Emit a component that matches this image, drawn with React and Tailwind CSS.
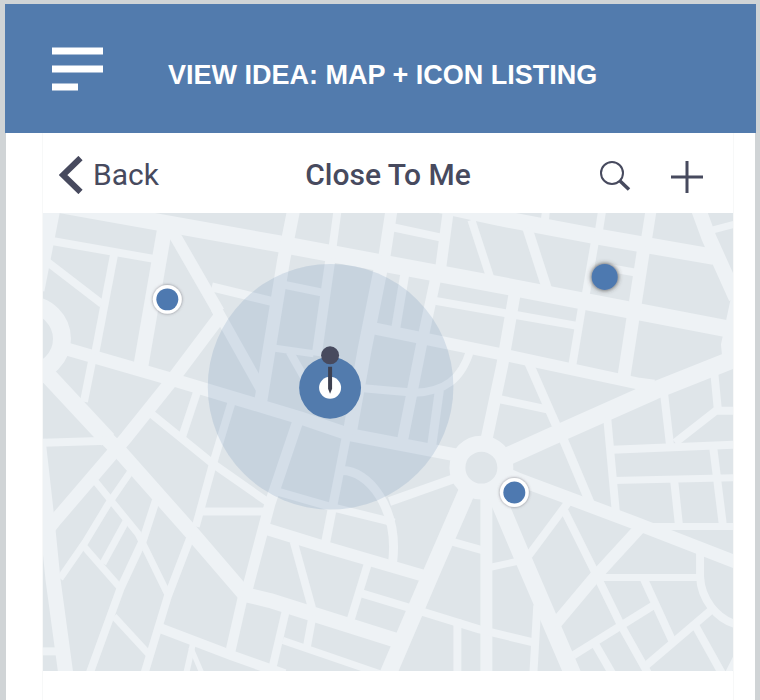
const ROADS = [
  // main avenues
  { w: 17, d: "M40 201L280 244L500 285L734 330" },
  { w: 16, d: "M440 205L500 218L600 237L715 257" },
  { w: 15, d: "M699 208L710 238L737 298" },
  { w: 12, d: "M738 298L728 345L730 365" },
  { w: 18, d: "M490 465L545 440L655 391L738 358" },
  { w: 12, d: "M372 328L500 354L640 384L655 386" },
  { w: 13, d: "M66 349L170 379L270 409L300 418L350 435L460 456" },
  { w: 17, d: "M38 365L108 440" },
  { w: 15, d: "M104 436L120 452L190 531L245 595L270 601L400 642" },
  { w: 15, d: "M38 440L47 520L53 580L66 676" },
  { w: 12, d: "M262 528L327 548L430 578" },
  { w: 17, d: "M470 486L433 571L388 676" },
  { w: 12, d: "M487 490V676" },
  { w: 17, d: "M492 484L522 555L574 676" },
  { w: 13, d: "M500 471L520 480L635 523L738 563" },
  { w: 12, d: "M516 290L503 365L486 445" },

  // left side
  { w: 17, d: "M52 208L36 290" },
  { w: 8, d: "M52 241L154 259" },
  { w: 8, d: "M46 261L102 304" },
  { w: 15, d: "M166 222L140 372" },
  { w: 8, d: "M115 250L95 355" },
  { w: 8, d: "M92 362L84 402" },
  { w: 12, d: "M173 232L219 312" },
  { w: 11, d: "M216 308L263 392" },
  { w: 9, d: "M212 287L274 302" },
  { w: 13, d: "M222 314L171 382L127 437L56 520L44 535" },
  { w: 8, d: "M43 443L108 441" },
  { w: 8, d: "M43 652L58 652" },
  { w: 8, d: "M150 413L213 464L270 504" },
  { w: 8, d: "M197 393L182 438" },
  { w: 8, d: "M232 402L213 465L196 527" },
  { w: 8, d: "M200 512L268 512" },
  { w: 7, d: "M94 480L138 534L146 550L169 597" },
  { w: 7, d: "M130 473L108 505L85 543L60 579" },
  { w: 7, d: "M126 522L103 564" },
  { w: 8, d: "M156 501L143 541L121 588L89 676" },
  { w: 7, d: "M84 547L120 588" },
  { w: 7, d: "M114 617L150 656" },
  { w: 8, d: "M191 537L168 597L144 676" },
  { w: 10, d: "M161 629L232 656L285 675" },
  { w: 10, d: "M243 598L230 655" },
  { w: 6, d: "M193 645L186 676" },
  { w: 5, d: "M191 648L203 676" },
  { w: 11, d: "M298 422L270 505L247 592" },

  // centre
  { w: 13, d: "M294 210L284 260L261 402" },
  { w: 8, d: "M338 210L333 247" },
  { w: 10, d: "M331 258L317 356" },
  { w: 8, d: "M285 285L324 293" },
  { w: 7, d: "M272 348L314 354" },
  { w: 8, d: "M290 352L307 382" },
  { w: 12, d: "M392 210L385 256" },
  { w: 14, d: "M383 260L365 350L350 434" },
  { w: 8, d: "M392 227L443 238" },
  { w: 11, d: "M449 210L441 270" },
  { w: 11, d: "M437 275L422 345L402 446" },
  { w: 9, d: "M406 270L396 330" },
  { w: 8, d: "M472 220L491 278" },
  { w: 8, d: "M436 301L578 326" },
  { w: 8, d: "M358 388L415 393C445 392 462 380 471 350" },
  { w: 9, d: "M440 390L432 448" },
  { w: 9, d: "M347 436L326 543" },
  { w: 8, d: "M278 492L330 507L395 523" },
  { w: 9, d: "M342 471C368 470 400 508 393 564" },
  { w: 9, d: "M390 502L455 479" },
  { w: 8, d: "M294 542L313 611" },
  { w: 8, d: "M369 562L350 624" },
  { w: 8, d: "M362 594L425 613L480 630L534 643" },
  { w: 8, d: "M286 612L271 676" },
  { w: 8, d: "M313 616L307 649" },
  { w: 7, d: "M283 641L382 675" },
  { w: 8, d: "M452 542L484 551" },
  { w: 8, d: "M458 620V676" },
  { w: 7, d: "M490 568L522 561" },

  // right side
  { w: 8, d: "M547 208L545 225" },
  { w: 10, d: "M528 228L548 290" },
  { w: 8, d: "M603 210L598 242" },
  { w: 8, d: "M596 240L586 298" },
  { w: 8, d: "M610 268L638 273" },
  { w: 11, d: "M652 210L646 248" },
  { w: 13, d: "M645 246L624 382" },
  { w: 7, d: "M714 230L736 224" },
  { w: 8, d: "M583 306L573 366" },
  { w: 8, d: "M498 399L549 410" },
  { w: 9, d: "M529 362L558 428" },
  { w: 8, d: "M608 418L617 516" },
  { w: 8, d: "M665 394L671 446" },
  { w: 8, d: "M715 370L719 412" },
  { w: 8, d: "M736 411L717 411L676 443" },
  { w: 8, d: "M613 450L736 445" },
  { w: 7, d: "M614 481L736 478" },
  { w: 8, d: "M714 446L724 527" },
  { w: 8, d: "M675 480L680 527" },
  { w: 7, d: "M640 527L736 527" },
  { w: 9, d: "M563 437L592 506" },
  { w: 8, d: "M571 500L528 558" },
  { w: 8, d: "M564 509L597 575L623 628L650 676" },
  { w: 12, d: "M642 527L597 576L555 626" },
  { w: 7, d: "M600 578H702" },
  { w: 8, d: "M701 550V577C702 600 718 620 738 625" },
  { w: 8, d: "M714 609L645 668" },
  { w: 8, d: "M645 580L673 641" },
  { w: 8, d: "M656 605L574 656" },
  { w: 8, d: "M596 645L614 676" },
  { w: 8, d: "M695 624L724 676" },
  { w: 6, d: "M738 656L728 676" },
  { w: 8, d: "M538 606L534 676" },
];

function CityMap() {
  return (
    <svg
      viewBox="43 213 691 459"
      className="block w-full bg-[#dfe5e9]"
      role="img"
      aria-label="Map of places close to me"
    >
      <defs>
        <filter id="pin-shadow" x="-50%" y="-50%" width="200%" height="200%">
          <feDropShadow dx="0" dy="0" stdDeviation="1.5" floodColor="#5b5760" floodOpacity="0.7" />
        </filter>
        <filter id="dot-shadow" x="-50%" y="-50%" width="200%" height="200%">
          <feDropShadow dx="0" dy="0" stdDeviation="2.5" floodColor="#3c3a38" floodOpacity="1" />
        </filter>
      </defs>

      <g fill="none" stroke="#eef2f5" strokeLinejoin="round">
        {ROADS.map((road) => (
          <path key={road.d} d={road.d} strokeWidth={road.w} />
        ))}
      </g>

      {/* roundabouts */}
      <circle cx="28" cy="339" r="34" fill="#dfe5e9" stroke="#eef2f5" strokeWidth="18" />
      <circle cx="482" cy="468" r="24" fill="#dfe5e9" stroke="#eef2f5" strokeWidth="16" />

      {/* search radius */}
      <circle cx="331" cy="387" r="123" fill="#527bad" fillOpacity="0.17" />

      {/* places */}
      <circle cx="167.5" cy="299.5" r="14.5" fill="#fff" filter="url(#pin-shadow)" />
      <circle cx="167.5" cy="299.5" r="11" fill="#4e79b0" />
      <circle cx="515" cy="493" r="14.5" fill="#fff" filter="url(#pin-shadow)" />
      <circle cx="515" cy="493" r="11" fill="#4e79b0" />
      <circle cx="605.5" cy="277" r="13" fill="#4e79b0" filter="url(#dot-shadow)" />

      {/* current position */}
      <circle cx="330.5" cy="388" r="31" fill="#527bad" />
      <circle cx="330.5" cy="388" r="11" fill="#fff" />
      <path d="M328.5 367H332.5V389L330.5 394L328.5 389Z" fill="#3d4050" />
      <circle cx="330.5" cy="355.5" r="9" fill="#474a5e" />
    </svg>
  );
}

function Header() {
  return (
    <header className="flex h-[129px] items-center bg-[#527bad] pl-[47px] text-white">
      <button type="button" aria-label="Menu" className="shrink-0">
        <svg width="52" height="44" viewBox="0 0 52 44" fill="currentColor" className="block">
          <rect y="0.5" width="51" height="7" />
          <rect y="18.5" width="51" height="7" />
          <rect y="36.5" width="26" height="7" />
        </svg>
      </button>
      <h1 className="ml-16 pt-3 text-[27px] leading-8 font-bold">
        VIEW IDEA: MAP + ICON LISTING
      </h1>
    </header>
  );
}

function Toolbar() {
  return (
    <nav className="grid h-20 grid-cols-[1fr_auto_1fr] items-center px-4 pt-1 font-[Roboto,sans-serif] text-[#474a5e]">
      <a href="#back" className="flex items-center gap-2 text-[30px] leading-10">
        <svg width="26" height="38" viewBox="0 0 26 38" fill="none" stroke="currentColor" strokeWidth="6" className="block">
          <path d="M21.5 2L4 19L21.5 36" />
        </svg>
        Back
      </a>
      <h2 className="text-[30px] leading-10 font-medium">Close To Me</h2>
      <div className="flex items-center justify-end gap-10 pt-1 pr-[14px]">
        <button type="button" aria-label="Search">
          <svg width="32" height="32" viewBox="0 0 32 32" fill="none" stroke="currentColor" className="block">
            <circle cx="13" cy="12" r="11" strokeWidth="2" />
            <path d="M20.5 19.5L30 28.5" strokeWidth="3.5" />
          </svg>
        </button>
        <button type="button" aria-label="Add">
          <svg width="32" height="32" viewBox="0 0 32 32" fill="none" stroke="currentColor" strokeWidth="3" className="block">
            <path d="M16 0V32M0 16H32" />
          </svg>
        </button>
      </div>
    </nav>
  );
}

export default function App() {
  return (
    <div className="flex min-h-screen flex-col bg-[#d0d4d6] pt-1 pr-1 pl-[5px] font-['Liberation_Sans',Arial,sans-serif]">
      <Header />
      <main className="mr-px ml-px flex flex-1 flex-col bg-white pr-[21px] pl-9">
        <div className="flex-1 border-x border-[#f7f8f8]">
          <Toolbar />
          <CityMap />
        </div>
      </main>
    </div>
  );
}
